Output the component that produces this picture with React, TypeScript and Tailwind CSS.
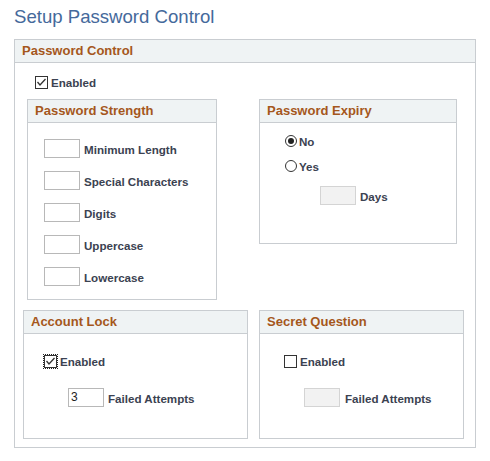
import React from 'react'

const label = 'text-[11.6px] font-bold text-[#3b4251] leading-[14px]'

const Checkbox = ({ checked, focused }: { checked?: boolean; focused?: boolean }) => (
    <div
        className={`w-[13px] h-[13px] border border-[#333333] bg-white flex items-center justify-center ${
            focused ? 'outline-1 outline-dotted outline-[#222222] outline-offset-0' : ''
        }`}
    >
        {checked && (
            <svg width="11" height="11" viewBox="0 0 11 11">
                <polyline points="1.5,5 4,8 9.5,2" fill="none" stroke="#333333" strokeWidth="1.3" />
            </svg>
        )}
    </div>
)

const Radio = ({ checked }: { checked?: boolean }) => (
    <div className="w-[12px] h-[12px] rounded-full border border-[#333333] bg-white flex items-center justify-center">
        {checked && <div className="w-[6px] h-[6px] rounded-full bg-[#222222]" />}
    </div>
)

const TextBox = ({ value, disabled }: { value?: string; disabled?: boolean }) => (
    <div
        className={`w-[36px] h-[19px] border text-[12px] leading-[17px] pl-[2px] text-[#222222] ${
            disabled ? 'bg-[#f2f2f2] border-[#d4d4d4]' : 'bg-white border-[#b8b8b8]'
        }`}
    >
        {value}
    </div>
)

const Group = ({
    title,
    className,
    children,
}: {
    title: string
    className: string
    children?: React.ReactNode
}) => (
    <div className={`border border-[#c9cdd1] bg-white flex flex-col ${className}`}>
        <div className="h-[23px] shrink-0 bg-[#eff3f4] border-b border-[#c9cdd1] pl-[7px] text-[13px] leading-[21px] font-bold text-[#a5571c]">
            {title}
        </div>
        {children}
    </div>
)

export default function App() {
    const strength = ['Minimum Length', 'Special Characters', 'Digits', 'Uppercase', 'Lowercase']

    return (
        <div className="w-[490px] h-[461px] bg-white font-['Liberation_Sans',Arial,sans-serif]">
            <h1 className="h-[39px] pl-[14px] pt-[6px] text-[18.6px] leading-[22px] text-[#45699b]">
                Setup Password Control
            </h1>
            <div className="ml-[14px] w-[462px] h-[409px] border border-[#c9cdd1] flex flex-col">
                <div className="h-[23px] shrink-0 bg-[#eff3f4] border-b border-[#c9cdd1] pl-[7px] text-[13px] leading-[21px] font-bold text-[#a5571c]">
                    Password Control
                </div>

                <div className="flex items-center gap-[3px] pl-[20px] mt-[11px]">
                    <Checkbox checked />
                    <span className={`${label} pt-[2px]`}>Enabled</span>
                </div>

                <div className="flex items-start mt-[9px] pl-[12px] gap-[42px]">
                    <Group title="Password Strength" className="w-[190px] h-[201px]">
                        <div className="flex flex-col gap-[13px] pt-[16px] pl-[16px]">
                            {strength.map((s) => (
                                <div key={s} className="flex items-center gap-[4px]">
                                    <TextBox />
                                    <span className={`${label} pt-[2px]`}>{s}</span>
                                </div>
                            ))}
                        </div>
                    </Group>

                    <Group title="Password Expiry" className="w-[198px] h-[145px]">
                        <div className="flex flex-col pl-[25px] pt-[10px]">
                            <div className="flex items-center gap-[2px]">
                                <Radio checked />
                                <span className={`${label} pt-[2px]`}>No</span>
                            </div>
                            <div className="flex items-center gap-[2px] mt-[9px]">
                                <Radio />
                                <span className={`${label} pt-[2px]`}>Yes</span>
                            </div>
                            <div className="flex items-center gap-[4px] mt-[12px] pl-[35px]">
                                <TextBox disabled />
                                <span className={`${label} pt-[2px]`}>Days</span>
                            </div>
                        </div>
                    </Group>
                </div>

                <div className="flex items-start mt-[10px] pl-[8px] gap-[11px]">
                    <Group title="Account Lock" className="w-[225px] h-[129px]">
                        <div className="flex flex-col pt-[19px] pl-[20px]">
                            <div className="flex items-center gap-[3px]">
                                <Checkbox checked focused />
                                <span className={`${label} pt-[2px]`}>Enabled</span>
                            </div>
                            <div className="flex items-center gap-[4px] mt-[19px] pl-[24px]">
                                <TextBox value="3" />
                                <span className={`${label} pt-[2px]`}>Failed Attempts</span>
                            </div>
                        </div>
                    </Group>

                    <Group title="Secret Question" className="w-[205px] h-[129px]">
                        <div className="flex flex-col pt-[19px] pl-[24px]">
                            <div className="flex items-center gap-[3px]">
                                <Checkbox />
                                <span className={`${label} pt-[2px]`}>Enabled</span>
                            </div>
                            <div className="flex items-center gap-[5px] mt-[19px] pl-[20px]">
                                <TextBox disabled />
                                <span className={`${label} pt-[2px]`}>Failed Attempts</span>
                            </div>
                        </div>
                    </Group>
                </div>
            </div>
        </div>
    )
}
